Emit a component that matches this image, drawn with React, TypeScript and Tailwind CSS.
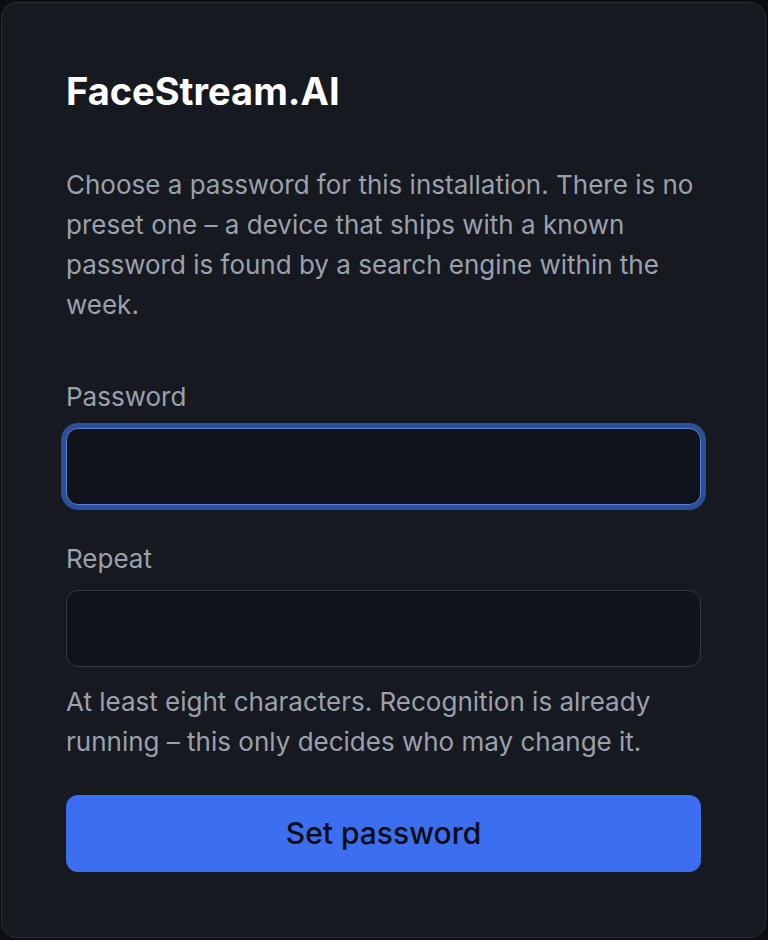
import React from 'react';

const Field: React.FC<{ label: string; focused?: boolean }> = ({ label, focused }) => (
  <label className="flex flex-col">
    <span className="text-[26px] leading-10 text-[#9aa1ad]">{label}</span>
    <input
      type="password"
      autoFocus={focused}
      className={`mt-[11px] h-[77px] w-full rounded-xl border bg-[#10131a] px-4 text-[26px] text-white outline-none ${
        focused ? 'border-[#5a7fd6] ring-[5px] ring-[#2c4f96]' : 'border-[#34383f]'
      }`}
    />
  </label>
);

export default function App() {
  return (
    <div className="min-h-[940px] bg-[#0c0e12] p-[2px] pl-px" style={{ fontFamily: 'Inter, "Noto Sans", sans-serif' }}>
      <div className="h-[936px] rounded-2xl border border-[#2a2e35] bg-[#16191f] px-16 pt-16">
        <h1 className="text-[38px] font-bold leading-[48px] text-white">FaceStream.AI</h1>
        <p className="mt-[50px] text-[26px] leading-10 text-[#9aa1ad]">
          Choose a password for this installation. There is no preset one – a device that ships with a known password is
          found by a search engine within the week.
        </p>
        <div className="mt-[52px] flex flex-col gap-[34px]">
          <Field label="Password" focused />
          <Field label="Repeat" />
        </div>
        <p className="mt-[15px] text-[26px] leading-10 text-[#9aa1ad]">
          At least eight characters. Recognition is already running – this only decides who may change it.
        </p>
        <button
          type="button"
          className="mt-[33px] h-[77px] w-full rounded-xl bg-[#3b6ff0] text-[30px] font-medium text-[#0b0d14]"
        >
          Set password
        </button>
      </div>
    </div>
  );
}
